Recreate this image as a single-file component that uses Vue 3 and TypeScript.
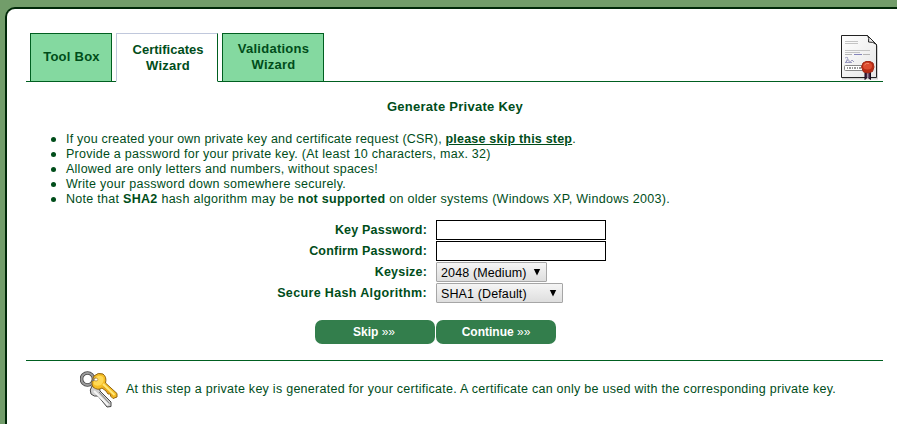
<script setup lang="ts">
import { ref } from 'vue'

interface Tab {
  lines: string[]
  kind: string
}

const tabs: Tab[] = [
  { lines: ['Tool Box'], kind: 'tools' },
  { lines: ['Certificates', 'Wizard'], kind: 'active' },
  { lines: ['Validations', 'Wizard'], kind: 'validations' },
]
const keyPassword = ref('')
const confirmPassword = ref('')
</script>

<template>
  <main class="panel">
    <header class="head">
      <nav class="tabs">
        <a v-for="tab in tabs" :key="tab.kind" class="tab" :class="tab.kind">
          <span v-for="line in tab.lines" :key="line">{{ line }}</span>
        </a>
      </nav>
      <svg class="certificate" width="40" height="46" viewBox="0 0 40 46">
        <defs>
          <linearGradient id="paper" x1="0" y1="0" x2="1" y2="1">
            <stop offset="0" stop-color="#fff" />
            <stop offset="1" stop-color="#e6e6e6" />
          </linearGradient>
        </defs>
        <path d="M2 2H29L38 11V44.500H2Z" fill="#999" opacity=".45" />
        <path d="M1.500 .5H27.500L36.500 9.500V42.500H1.500Z" fill="url(#paper)" stroke="#222" />
        <path d="M27.500 .5Q29.500 3 28.500 7Q33 6.500 36.500 9.500Z" fill="#eee" stroke="#222" />
        <path d="M5 6.500H18M5 8.500H18M5 15.500H30M5 17.500H20" stroke="#c4c4c4" />
        <path d="M5 19.500H12M23 19.500H30" stroke="#b4b4b4" />
        <path d="M14 19.500H22" stroke="#8585bb" />
        <path d="M5 23Q9 21 7 25T6 27Q9 23 9 26T12 25L14 27M5 27.500H12" fill="none" stroke="#8888b5" stroke-width=".8" />
        <rect x="4.500" y="30.500" width="23" height="5" rx="1" fill="#fff" stroke="#888" />
        <path d="M7 33H22" stroke="#777" stroke-width="1.500" stroke-dasharray="1 1 2 1" />
        <path d="M25 36V44.500L27.500 42L30.500 44.500V36Z" fill="#442442" stroke="#150b1b" />
        <path d="M27.800 37V43" stroke="#b8a7b9" stroke-width="1.200" />
        <path d="M23 28L26 26.500H30L33 28L34 32L32.500 36.500L28 38L23.500 37L21.500 32Z" fill="#b92c14" stroke="#a32a17" stroke-linejoin="round" />
        <ellipse cx="27.500" cy="31" rx="4.500" ry="3.500" fill="#dc4c30" />
        <path d="M24.500 30Q26 27.500 29 28.500" fill="none" stroke="#f08a6b" />
      </svg>
    </header>

    <h1>Generate Private Key</h1>
    <ul>
      <li class="own-key">If you created your own private key and certificate request (CSR), <a class="skip">please skip this step</a>.</li>
      <li>Provide a password for your private key. (At least 10 characters, max. 32)</li>
      <li>Allowed are only letters and numbers, without spaces!</li>
      <li class="write">Write your password down somewhere securely.</li>
      <li class="note">Note that <b>SHA2</b> hash algorithm may be <b>not supported</b> on older systems (Windows XP, Windows 2003).</li>
    </ul>

    <form @submit.prevent>
      <label for="key">Key Password:</label>
      <input id="key" v-model="keyPassword" type="password">
      <label for="confirm">Confirm Password:</label>
      <input id="confirm" v-model="confirmPassword" type="password">
      <span class="label">Keysize:</span>
      <button type="button" class="select keysize">2048 (Medium)<svg width="8" height="7" viewBox="0 0 8 7"><path d="M.8 0H7.200L4 6.500Z" /></svg></button>
      <span class="label hash">Secure Hash Algorithm:</span>
      <button type="button" class="select algorithm">SHA1 (Default)<svg width="8" height="7" viewBox="0 0 8 7"><path d="M.8 0H7.200L4 6.500Z" /></svg></button>
    </form>

    <div class="actions">
      <button type="button">Skip <span>»»</span></button>
      <button type="button" class="continue">Continue <span>»»</span></button>
    </div>

    <footer>
      <svg class="keys" width="40" height="40" viewBox="0 0 40 40">
        <g stroke-linejoin="round">
          <path d="M12 15Q9 19 11 23Q14 26 18 25L27 36L31 35.500V31L20 20L19 15Z" fill="#cfcfcf" stroke="#444" />
          <path d="M14 20L28 34" stroke="#f5f5f5" stroke-width="2" />
          <path d="M19 21L29.500 32.500" stroke="#808080" />
          <circle cx="7.500" cy="8" r="6" fill="none" stroke="#444" stroke-width="3.600" />
          <circle cx="7.500" cy="8" r="6" fill="none" stroke="#9b9b9b" stroke-width="2" />
          <path d="M14 5Q18 1 23 3Q27 6 25.500 12L37 22.500V26L33 27.500L30.500 25V23L28 23L26 20L22 17Q18 20 13 16Q10.500 12 14 5Z" fill="#f6be24" stroke="#916411" />
          <path d="M15 7Q19 3 23 6Q25 10 21 14Q16 16 13.500 13Z" fill="#ffd955" />
          <path d="M23 13L34.500 24" stroke="#ffe87a" stroke-width="1.800" />
          <path d="M23 15.500L33 25.500" stroke="#d99313" />
          <path d="M12.700 10Q13.500 8 16 7.500" fill="none" stroke="#777" stroke-width="2" />
          <ellipse cx="16" cy="8.500" rx="1.800" ry="1.500" fill="#fff" stroke="#a97a1a" stroke-width=".7" />
        </g>
      </svg>
      <p>At this step a private key is generated for your certificate. A certificate can only be used with the corresponding private key.</p>
    </footer>
  </main>
</template>

<style>
html { background: #729d6a; overflow: hidden; }
body { background: #729d6a; }
</style>

<style scoped>
* { box-sizing: border-box; }
.panel {
  margin: 7px 0 0 5px;
  height: 417px;
  padding: 24px 14px 0 19px;
  border: solid #002808;
  border-width: 2px 0 0 2px;
  border-radius: 10px 0 0 0;
  background: #fff;
  color: #004d1a;
  font: 12.5px/15px "Liberation Sans", Arial, sans-serif;
  letter-spacing: .25px;
  white-space: nowrap;
  overflow: hidden;
}
.head {
  display: flex;
  justify-content: space-between;
  height: 49px;
  border-bottom: 1px solid #005f20;
}
.tabs { display: flex; gap: 4px; padding-left: 4px; height: 49px; }
.tab {
  display: flex;
  flex-direction: column;
  align-items: center;
  justify-content: center;
  border: 1px solid #005f20;
  background: #84d9a0;
  font-weight: bold;
  font-size: 13px;
  line-height: 16px;
  width: 102px;
  padding: 0 0 2px 1px;
}
.tools { width: 82px; }
.active {
  border-color: #c0c8dc #005f20 #fff #c0c8dc;
  background: #fff;
  padding: 0 0 0 2px;
}
.active span:first-child { letter-spacing: .02px; }
.certificate { margin: 2px 3px 0 0; }
h1 { margin: 17px 0 0; padding-left: 1px; font-size: 13px; line-height: 16px; text-align: center; letter-spacing: .27px; }
ul { list-style: none; margin: 17px 0 0; padding: 0 0 0 25px; }
li { display: flex; align-items: center; white-space: pre; height: 15px; }
li::before { content: ""; width: 5px; height: 5px; margin-right: 10px; border-radius: 50%; background: #004d1a; }
.own-key { letter-spacing: .21px; }
.write { letter-spacing: .28px; }
.note { letter-spacing: .29px; }
.skip { font-weight: bold; text-decoration: underline; }
form { display: grid; grid-template-columns: 401px auto; grid-auto-rows: 20px; column-gap: 9px; row-gap: 1px; margin-top: 13px; justify-items: start; }
label, .label { justify-self: end; font-weight: bold; line-height: 20px; letter-spacing: .19px; }
.hash { letter-spacing: .36px; }
input { width: 170px; height: 20px; border: 1px solid #000; padding: 1px; background: #fff; }
.select {
  display: flex;
  align-items: center;
  justify-content: space-between;
  height: 20px;
  width: 111px;
  padding: 2px 5px 0 4px;
  border: 1px solid #a6a6a6;
  border-radius: 1px;
  background: linear-gradient(#f5f5f5, #dedede);
  color: #000;
  font: 12.5px/16px "Liberation Sans", Arial, sans-serif;
  letter-spacing: .12px;
}
.select svg { margin-bottom: 2px; }
.algorithm { width: 127px; }
.actions { display: flex; gap: 1px; margin: 17px 0 0 289px; }
.actions button {
  width: 120px;
  height: 24px;
  border: 0;
  border-radius: 7px;
  padding: 0 2px 0 0;
  background: #337e4c;
  color: #fff;
  font: bold 12px/24px "Liberation Sans", Arial, sans-serif;
}
.actions .continue { padding: 0; }
.actions span { font-weight: normal; }
footer { display: flex; align-items: center; margin-top: 16px; padding: 10px 0 0 54px; border-top: 1px solid #005f20; }
footer p { margin: 0 0 3px 6px; letter-spacing: .267px; }
</style>
